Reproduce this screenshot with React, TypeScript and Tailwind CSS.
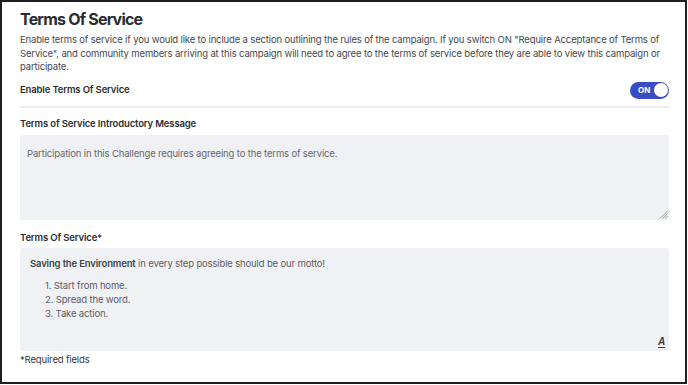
export default function App() {
  return (
    <div
      className="w-[687px] h-[384px] border-2 border-[#1f1f1f] bg-white text-[#2d2f33]"
      style={{ fontFamily: "Inter, 'Noto Sans', sans-serif" }}
    >
      <div className="pl-[18px] pr-[16px] pt-[6px] tracking-[-0.15px]">
        <h1 className="text-[16px] font-bold leading-[22px] text-[#2a2c30] tracking-[-0.8px]">Terms Of Service</h1>
        <p className="mt-[3px] text-[9.5px] leading-[13.5px] text-[#45484e]">
          Enable terms of service if you would like to include a section outlining the rules of the campaign. If you switch ON "Require Acceptance of Terms of Service", and community members arriving at this campaign will need to agree to the terms of service before they are able to view this campaign or participate.
        </p>
        <div className="mt-[8px] flex items-center justify-between h-[17px]">
          <span className="text-[9.5px] font-semibold text-[#2b2d31]">Enable Terms Of Service</span>
          <div className="w-[39px] h-[17px] rounded-full bg-[#3a4bc4] flex items-center justify-between pl-[8px] pr-[1.5px]">
            <span className="text-[8px] font-bold text-white tracking-normal">ON</span>
            <span className="w-[14px] h-[14px] rounded-full bg-white" />
          </div>
        </div>
        <div className="mt-[7px] h-[2px] bg-[#ebecef]" />
        <div className="mt-[9px] text-[9.5px] font-semibold leading-[13px] text-[#2b2d31]">Terms of Service Introductory Message</div>
        <div className="relative mt-[5.5px] h-[85px] rounded-[3px] bg-[#f0f1f4] px-[7px] pt-[4px]">
          <span className="text-[9.5px] leading-[13.5px] text-[#65686f]">Participation in this Challenge requires agreeing to the terms of service.</span>
          <svg className="absolute right-[1px] bottom-[1px]" width="9" height="9" viewBox="0 0 9 9">
            <path d="M8.5 1 L1 8.5 M8.5 3.5 L3.5 8.5 M8.5 6 L6 8.5" stroke="#9a9ca3" strokeWidth="1" />
          </svg>
        </div>
        <div className="mt-[10.5px] text-[9.5px] font-semibold leading-[13px] text-[#2b2d31]">Terms Of Service*</div>
        <div className="relative mt-[4.5px] h-[103px] rounded-[3px] bg-[#f0f1f4] px-[10px] pt-[9px] text-[9.5px] text-[#5a5d64]">
          <p className="leading-[13.5px]">
            <span className="font-semibold text-[#404349]">Saving the Environment</span> in every step possible should be our motto!
          </p>
          <ol className="mt-[8px] pl-[15px] leading-[14px]">
            <li>1. Start from home.</li>
            <li>2. Spread the word.</li>
            <li>3. Take action.</li>
          </ol>
          <span className="absolute right-[4px] bottom-[3px] text-[10px] font-bold italic leading-[10px] text-[#3a3c40] border-b-[1.5px] border-[#3a3c40]" style={{ fontFamily: "Arial, 'Liberation Sans', sans-serif" }}>A</span>
        </div>
        <div className="mt-[1.5px] text-[9.5px] leading-[13px] text-[#35383d]">*Required fields</div>
      </div>
    </div>
  );
}
